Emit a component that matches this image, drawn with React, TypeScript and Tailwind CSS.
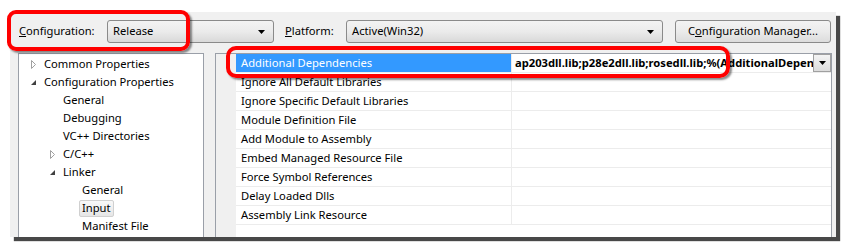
import React from "react";

const treeItems = [
  { label: "Common Properties", indent: 0, arrow: "closed" },
  { label: "Configuration Properties", indent: 0, arrow: "open" },
  { label: "General", indent: 1 },
  { label: "Debugging", indent: 1 },
  { label: "VC++ Directories", indent: 1 },
  { label: "C/C++", indent: 1, arrow: "closed" },
  { label: "Linker", indent: 1, arrow: "open" },
  { label: "General", indent: 2 },
  { label: "Input", indent: 2, selected: true },
  { label: "Manifest File", indent: 2 },
];

const props = [
  "Additional Dependencies",
  "Ignore All Default Libraries",
  "Ignore Specific Default Libraries",
  "Module Definition File",
  "Add Module to Assembly",
  "Embed Managed Resource File",
  "Force Symbol References",
  "Delay Loaded Dlls",
  "Assembly Link Resource",
];

const indentClass = ["pl-[25px]", "pl-[44px]", "pl-[63px]"];
const arrowPos = ["left-[11px]", "left-[30px]", "left-[49px]"];

function Arrow({ kind }: { kind: string }) {
  if (kind === "open") {
    return (
      <svg width="7" height="7" viewBox="0 0 7 7">
        <path d="M6 1 L6 6 L1 6 Z" fill="#404040" />
      </svg>
    );
  }
  return (
    <svg width="7" height="9" viewBox="0 0 7 9">
      <path d="M1.5 0.5 L5.5 4.5 L1.5 8.5 Z" fill="white" stroke="#a0a0a0" />
    </svg>
  );
}

function DownArrow() {
  return (
    <svg width="7" height="4" viewBox="0 0 7 4">
      <path d="M0 0 L7 0 L3.5 4 Z" fill="#000" />
    </svg>
  );
}

function Combo({ value, className }: { value: string; className: string }) {
  return (
    <div
      className={`${className} h-[23px] flex items-center justify-between rounded-[3px] border border-[#8a8a8a] bg-gradient-to-b from-[#f3f3f3] via-[#ebebeb] to-[#d9d9d9] pl-[5px] pr-[8px]`}
    >
      <span>{value}</span>
      <DownArrow />
    </div>
  );
}

export default function App() {
  return (
    <div
      className="relative w-[850px] h-[250px] bg-white overflow-hidden text-[11.2px] text-black"
      style={{ fontFamily: '"Noto Sans", "Open Sans", sans-serif' }}
    >
      <div className="ml-[10px] mt-[12px] w-[826px] h-[225px] bg-[#f0f0f0] shadow-[4px_4px_1px_rgba(40,40,40,0.85)] flex flex-col">
        <div className="flex items-center mt-[8px] h-[23px]">
          <span className="ml-[9px] w-[88px] shrink-0">
            <span className="underline">C</span>onfiguration:
          </span>
          <Combo value="Release" className="w-[167px] shrink-0" />
          <span className="ml-[11px] w-[61px] shrink-0">
            <span className="underline">P</span>latform:
          </span>
          <Combo value="Active(Win32)" className="w-[317px] shrink-0" />
          <div className="ml-[12px] w-[156px] shrink-0 h-[23px] flex items-center justify-center rounded-[3px] border border-[#8a8a8a] bg-gradient-to-b from-[#f3f3f3] via-[#ebebeb] to-[#dcdcdc]">
            C<span className="underline">o</span>nfiguration Manager...
          </div>
        </div>

        <div className="flex mt-[10px] flex-1 min-h-0">
          <div className="ml-[8px] w-[186px] shrink-0 bg-white border-l border-r border-t border-[#9a9fa8] pt-[1px]">
            {treeItems.map((item, i) => (
              <div
                key={i}
                className={`relative h-[18px] flex items-center ${indentClass[item.indent]}`}
              >
                {item.arrow && (
                  <span className={`absolute ${arrowPos[item.indent]} top-0 h-[18px] flex items-center`}>
                    <Arrow kind={item.arrow} />
                  </span>
                )}
                <span
                  className={
                    item.selected
                      ? "-ml-[3px] px-[2px] h-[17px] flex items-center rounded-[2px] border border-[#d0d0d0] bg-gradient-to-b from-[#f8f8f8] to-[#e6e6e6]"
                      : ""
                  }
                >
                  {item.label}
                </span>
              </div>
            ))}
          </div>

          <div className="ml-[11px] w-[617px] shrink-0 overflow-hidden bg-white border-l border-r border-t border-[#9a9fa8] flex">
            <div className="w-[20px] shrink-0 bg-[#f0f0f0]" />
            <div className="flex-1 min-w-0 flex flex-col">
              {props.map((p, i) => (
                <div key={p} className="flex h-[19px] border-b border-[#ececec]">
                  <div
                    className={`w-[276px] shrink-0 pl-[5px] flex items-center border-r border-[#ececec] ${
                      i === 0 ? "bg-[#3399ff] text-white" : ""
                    }`}
                  >
                    {p}
                  </div>
                  <div className="flex-1 min-w-0 flex items-center">
                    {i === 0 && (
                      <>
                        <span className="flex-1 min-w-0 overflow-hidden whitespace-nowrap font-bold pl-[3px]">
                          ap203dll.lib;p28e2dll.lib;rosedll.lib;%(AdditionalDependencies)
                        </span>
                        <span className="w-[18px] h-[18px] shrink-0 flex items-center justify-center border border-[#a0a0a0] bg-gradient-to-b from-[#f4f4f4] to-[#dcdcdc]">
                          <DownArrow />
                        </span>
                      </>
                    )}
                  </div>
                </div>
              ))}
            </div>
          </div>
        </div>
      </div>

      <div className="absolute left-[7px] top-[10px] w-[183px] h-[41px] rounded-[9px] border-[4px] border-[#ff0000] shadow-[2px_2px_2px_rgba(0,0,0,0.45)]" />
      <div className="absolute left-[226px] top-[46px] w-[504px] h-[32px] rounded-[10px] border-[4px] border-[#ff0000] shadow-[2px_2px_2px_rgba(0,0,0,0.45)]" />
    </div>
  );
}
